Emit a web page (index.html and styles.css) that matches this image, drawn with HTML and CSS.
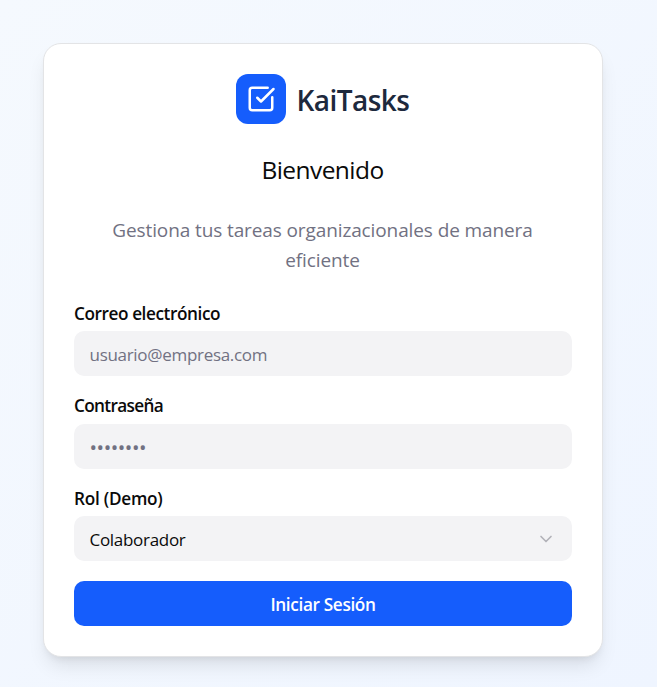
FILE: index.html
```html
<!DOCTYPE html>
<html lang="es">
<head>
<meta charset="utf-8">
<title>KaiTasks</title>
<link rel="stylesheet" href="styles.css">
</head>
<body>
<main class="card">
  <header class="header">
    <div class="brand">
      <span class="logo"><svg viewBox="0 0 24 24"><path d="M21 10.656V19a2 2 0 0 1-2 2H5a2 2 0 0 1-2-2V5a2 2 0 0 1 2-2h12.344"/><path d="m9 11 3 3L22 4"/></svg></span>
      <h1 class="name">KaiTasks</h1>
    </div>
    <h2 class="welcome">Bienvenido</h2>
    <p class="intro">Gestiona tus tareas organizacionales de manera<br>eficiente</p>
  </header>
  <form class="form">
    <div class="field">
      <label class="label label-email" for="email">Correo electrónico</label>
      <input class="control email" id="email" type="email" placeholder="usuario@empresa.com">
    </div>
    <div class="field">
      <label class="label label-password" for="password">Contraseña</label>
      <input class="control password" id="password" type="password" placeholder="••••••••">
    </div>
    <div class="field">
      <span class="label label-role">Rol (Demo)</span>
      <button class="control select" type="button"><span class="value">Colaborador</span><svg viewBox="0 0 24 24"><path d="m6 9 6 6 6-6"/></svg></button>
    </div>
    <button class="submit" type="button">Iniciar Sesión</button>
  </form>
</main>
</body>
</html>
```
FILE: styles.css
```css
* { box-sizing: border-box; margin: 0; }
body {
  min-height: 687px;
  padding: 43px 54px 30px 43px;
  background: linear-gradient(135deg, #f5f9fe, #eff5ff);
  font-family: "Segoe UI", "Open Sans", "Noto Sans", sans-serif;
  color: #0a0a0a;
  overflow: hidden;
}
svg { fill: none; stroke: currentColor; stroke-width: 2; stroke-linecap: round; stroke-linejoin: round; }
.card {
  height: 614px;
  padding: 30px;
  border: 1px solid #e3e4e6;
  border-radius: 18px;
  background: #fff;
  box-shadow: 0 12px 19px -4px rgba(0,0,0,.1), 0 5px 8px -5px rgba(0,0,0,.1);
}
.header { text-align: center; }
.brand { display: flex; justify-content: center; align-items: center; gap: 11px; height: 50px; padding-right: 1px; }
.logo { display: grid; place-items: center; width: 50px; height: 50px; border-radius: 12px; background: #155dfc; color: #fff; }
.logo svg { width: 30px; height: 30px; }
.name { padding-top: 2px; font-size: 28px; line-height: 50px; font-weight: 600; color: #1d293d; letter-spacing: -.55px; }
.welcome { margin-top: 31px; padding-right: 1px; font-size: 24.5px; line-height: 30px; font-weight: 400; letter-spacing: -.55px; }
.intro { margin-top: 30px; padding-right: 1px; color: #717182; font-size: 19px; line-height: 30px; letter-spacing: -.11px; white-space: nowrap; }
.form { margin-top: 28px; }
.field { height: 92.5px; }
.label { display: block; height: 28px; padding-top: 1px; font-size: 17.2px; line-height: 20px; font-weight: 600; letter-spacing: -.42px; white-space: nowrap; }
.label-password { padding-top: 0; letter-spacing: -.65px; }
.label-role { letter-spacing: -.25px; }
.control { display: flex; width: 100%; height: 45px; padding: 2px 15.5px 0; border: 0; border-radius: 10px; background: #f3f3f5; font: 17px/26px "Segoe UI", "Open Sans", sans-serif; letter-spacing: -.3px; color: #0a0a0a; }
.control::placeholder { color: #717182; opacity: 1; }
.password { padding-top: 3px; font-size: 20px; letter-spacing: -.45px; }
.select { align-items: center; justify-content: space-between; padding: 0 16px 0 15.5px; }
.value { padding-top: 2px; }
.select svg { width: 20px; height: 20px; color: #b2b2b8; }
.submit { display: block; width: 100%; height: 45px; padding-top: 3px; border: 0; border-radius: 10px; background: #155dfc; color: #fff; font: 600 17.2px/25px "Segoe UI", "Open Sans", sans-serif; letter-spacing: -.35px; }
```
